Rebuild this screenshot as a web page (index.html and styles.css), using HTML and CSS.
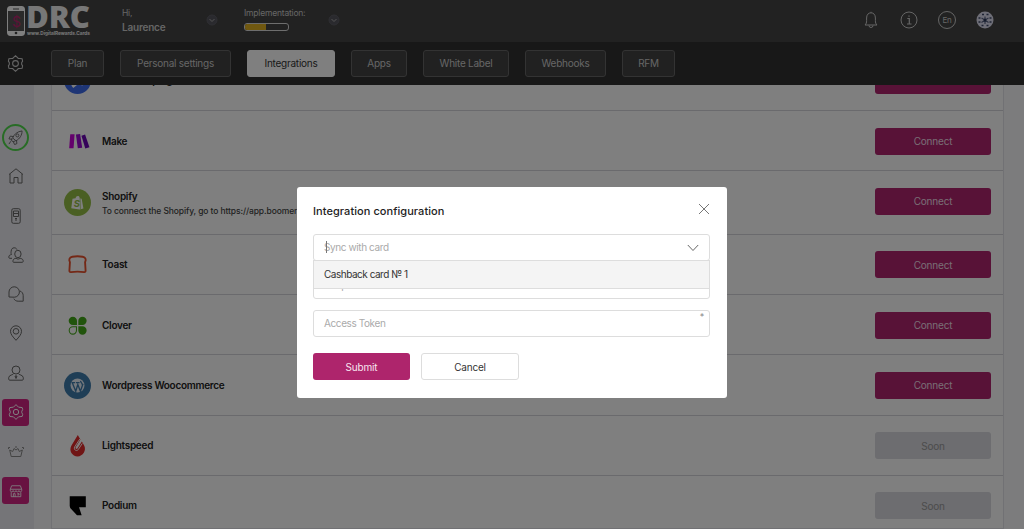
FILE: index.html
```html
<!DOCTYPE html>
<html lang="en">
<head>
    <meta charset="UTF-8">
    <meta name="viewport" content="width=device-width, initial-scale=1.0">
    <title>Integrations</title>
    <link rel="stylesheet" href="styles.css">
</head>
<body>

<!-- shared icons -->
<svg class="sprite">
    <symbol id="gear" viewBox="0 0 16 16">
        <path d="M6.3 2.2 8 .7l1.7 1.5.9 1 1.4.1 2.2.3.5 2.1-.9 1.5v1.6l.9 1.5-.5 2.1-2.2.3-1.4.1-.9 1L8 15.3l-1.7-1.5-.9-1-1.4-.1-2.2-.3-.5-2.1.9-1.5V7.2l-.9-1.5.5-2.1L4 3.3l1.4-.1z"/>
        <circle cx="8" cy="8" r="2.7"/>
    </symbol>
    <symbol id="chevron" viewBox="0 0 12 12">
        <circle cx="6" cy="6" r="5" class="chevron-ring"/>
        <path d="M3.5 5 6 7.5 8.5 5"/>
    </symbol>
</svg>

<header class="header">
    <svg class="logo" viewBox="0 0 84 32">
        <rect x="0.5" y="0.5" width="17" height="29" rx="2.5" fill="#555" stroke="#fff"/>
        <path d="M1 1h16v4H1zM1 25h16v4H1z" fill="#fff"/>
        <path d="M6 3h6" stroke="#555"/>
        <circle cx="9" cy="27" r="1.3" fill="#444"/>
        <text x="5" y="20.5" class="logo-sign">$</text>
        <text x="19" y="22" class="logo-name" textLength="64" lengthAdjust="spacingAndGlyphs">DRC</text>
        <text x="20" y="28.5" class="logo-url" textLength="63" lengthAdjust="spacingAndGlyphs">www.DigitalRewards.Cards</text>
    </svg>
    <div class="user">
        <div>
            <div class="small">Hi,</div>
            <div class="user-name">Laurence</div>
        </div>
        <svg class="chevron"><use href="#chevron"/></svg>
    </div>
    <div class="implementation">
        <div>
            <div class="small">Implementation:</div>
            <div class="progress"><span></span></div>
        </div>
        <svg class="chevron"><use href="#chevron"/></svg>
    </div>
    <div class="tools">
        <svg viewBox="0 0 18 18"><path d="M9 1.6V.8M3 14h12c-1.3-1.3-1.6-2.3-1.6-4.5V7C13.4 3.6 11.5 1.8 9 1.8S4.6 3.6 4.6 7v2.5c0 2.2-.3 3.2-1.6 4.5zM7 14.5a2 2 0 0 0 4 0"/></svg>
        <svg viewBox="0 0 18 18"><circle cx="9" cy="9" r="8"/><path d="M7.3 7.5h2V13M7 13h4.500M9 4.4v1.4" stroke-width="1.2"/></svg>
        <span class="lang">En</span>
        <svg viewBox="0 0 18 18" class="avatar">
            <circle cx="9" cy="9" r="8.5"/>
            <path d="M9 9V5.5M9 9l3.5-2M9 9l3.5 2.5M9 9v4M9 9l-3.5 2.5M9 9 5.5 7"/>
            <path class="dots" d="M6 3.5h2M10.5 3.5h2M2.5 7h2M13.5 7h2M2.5 11h2M13.5 11h2M5.5 14.5h2M10.5 14.5h2"/>
            <circle class="core" cx="9" cy="9" r="1.5"/>
        </svg>
    </div>
</header>

<nav class="subnav">
    <svg class="subnav-icon"><use href="#gear"/></svg>
    <a class="tab tab-plan">Plan</a>
    <a class="tab tab-personal">Personal settings</a>
    <a class="tab tab-integrations active">Integrations</a>
    <a class="tab tab-apps">Apps</a>
    <a class="tab tab-label">White Label</a>
    <a class="tab tab-webhooks">Webhooks</a>
    <a class="tab tab-rfm">RFM</a>
</nav>

<div class="page">
    <aside class="sidebar">
        <a class="side-item start">
            <svg viewBox="0 0 16 16"><path d="M5 8.5C6.500 4.5 10 1.5 15 1c0 4.5-2.5 8.5-6.5 10.500zM5.5 7l-3-.5L1 9.5l3.500.5M9 11l.5 3.500-2.500 1L5.500 12M4.500 8.500l-1 2.500 2 1.500 2.500-1M3 12l-2 3"/><circle cx="10" cy="5.800" r="1.6"/></svg>
        </a>
        <a class="side-item"><svg viewBox="0 0 16 16"><path d="M1 6.5 8 .8l7 5.700M2 6v9h4V9.500h4V15h4V6"/></svg></a>
        <a class="side-item"><svg viewBox="0 0 16 16"><rect x="3.8" y=".7" width="8.4" height="14.6" rx="1.5"/><path d="M5.5 3h5v5.500h-5zM5.500 5.500h5M7 10.500h2M7 12h2"/></svg></a>
        <a class="side-item"><svg viewBox="0 0 16 16"><path d="M5.5 15.300h8.800c1 0 1-1.300.8-2-.4-1.500-2-1.800-3-2-1.300 1-2.800 1-4 0-1.300.2-2.700.5-3 2-.2.800-.3 2 .4 2zM4 11.300H1.500C.5 11.300.7 9 1.500 8.300c.6-.5 1.500-.6 2-.8C2.800 6.500 3 5 3.200 4c.1-2 1.300-3.200 3-3.200 1.500 0 2.300.7 2.700 1.700"/><ellipse cx="9.9" cy="7" rx="3.2" ry="3.7"/></svg></a>
        <a class="side-item"><svg viewBox="0 0 16 16"><path d="M1 11V6a5.200 5.200 0 1 1 5.300 5.200zM12 5c2 .7 3.200 2.500 3.200 4.600v5.600h-5c-2 0-3.500-.9-4.300-2.500"/></svg></a>
        <a class="side-item"><svg viewBox="0 0 16 16"><path d="M8 15.300C5 12 2.500 9.300 2.500 6.300a5.500 5.500 0 0 1 11 0c0 3-2.500 5.700-5.500 9z"/><circle cx="8" cy="6.3" r="2.8"/></svg></a>
        <a class="side-item"><svg viewBox="0 0 16 16"><circle cx="8" cy="5" r="4"/><path d="M5.700 8.500c-.3 1.700-4.700 1-5 4.200v1.200c0 .8.300 1.300 1 1.300h12.600c.7 0 1-.5 1-1.300v-1.200c-.3-3.200-4.700-2.500-5-4.200M7 11h2l-1 2.500z"/></svg></a>
        <a class="side-item active"><svg><use href="#gear"/></svg></a>
        <a class="side-item crown"><svg viewBox="0 0 16 16"><path d="M3.2 13.500h9.600L14.300 7l-3 1.500L10 5.500 8 7 6 5.500 4.700 8.500l-3-1.500z"/><path d="M.5 6V4.500H2M15.500 6V4.500H14M7 4h2"/></svg></a>
        <a class="side-item active shop"><svg viewBox="0 0 16 16"><path d="M3 2h10l1.500 4h-13zM1.500 6v1.500c0 2 3.200 2 3.200 0 0 2 3.300 2 3.300 0 0 2 3.300 2 3.300 0 0 2 3.200 2 3.200 0V6M2.500 9.500v5h11v-5M5 14.500v-3.500h2v3.500M9.500 11h2v1.500h-2"/></svg></a>
    </aside>

    <main class="integrations">
        <div class="row">
            <svg class="brand" viewBox="0 0 26 26"><circle cx="13" cy="13" r="13" fill="#3d6bea"/><path d="M8 19l5-4 4 1 3-7" stroke="#fff" stroke-width="3" fill="none"/></svg>
            <div class="info"><div class="name">ActiveCampaign</div></div>
            <button class="btn">Connect</button>
        </div>
        <div class="row">
            <svg class="brand" viewBox="0 0 26 26">
                <path d="M6 6h4.200L9.200 19.500H5z" fill="#c800d8"/>
                <path d="M11.500 6.300l4-.5 2 13.200-4.200.6z" fill="#9a08d2"/>
                <path d="M16.800 7.500l3.500-1.200 4.200 12.200-4 1.300z" fill="#6a06b4"/>
            </svg>
            <div class="info"><div class="name">Make</div></div>
            <button class="btn">Connect</button>
        </div>
        <div class="row tall">
            <svg class="brand" viewBox="0 0 26 26">
                <circle cx="13" cy="13" r="13" fill="#95bf47"/>
                <path d="M8.200 9.500l3-.7c.2-2 3.600-3.300 4 .2l1.800.5 1.700 9.300-3.700 1-8-1.200z" fill="#fff"/>
                <path d="M15.500 8.500l.3 11" stroke="#95bf47" stroke-width=".6"/>
                <text x="9.5" y="17.7" class="bag-sign">S</text>
            </svg>
            <div class="info">
                <div class="name">Shopify</div>
                <div class="hint">To connect the Shopify, go to https://app.boomerangme.cards</div>
            </div>
            <button class="btn">Connect</button>
        </div>
        <div class="row">
            <svg class="brand" viewBox="0 0 26 26"><path d="M8 5.500q5-1 10 0c3 .6 3.500 3 2.300 5.200l.5 8.300q0 1.500-1.500 1.300-6.300-.8-12.600 0-1.500.2-1.500-1.300l.5-8.300C4.500 8.500 5 6.100 8 5.500z" fill="none" stroke="#e8502c" stroke-width="1.8"/></svg>
            <div class="info"><div class="name">Toast</div></div>
            <button class="btn">Connect</button>
        </div>
        <div class="row">
            <svg class="brand" viewBox="0 0 26 26">
                <path d="M12.500 12.500h-4a4 4 0 1 1 4-4zM13.800 12.500h4a4 4 0 1 0-4-4zM13.800 13.800v4a4 4 0 1 0 4-4z" fill="#43a818"/>
                <path d="M12 14.300v3.500a3.500 3.500 0 1 1-3.500-3.500z" fill="none" stroke="#43a818"/>
            </svg>
            <div class="info"><div class="name">Clover</div></div>
            <button class="btn">Connect</button>
        </div>
        <div class="row">
            <svg class="brand" viewBox="0 0 26 26">
                <circle cx="13" cy="13" r="13" fill="#3f7dad"/>
                <circle cx="13" cy="13" r="6.7" fill="#e8f0f8"/>
                <path d="M8 10.300l3.300 8.200 2-6.500 2.500 6.500 2.500-7.200M7.200 10.300h3.500M11.500 10.300H15M16 8.500c-.3 1.500 1.700 2 1.700 4" fill="none" stroke="#3f7dad" stroke-width="1.3"/>
            </svg>
            <div class="info"><div class="name">Wordpress Woocommerce</div></div>
            <button class="btn">Connect</button>
        </div>
        <div class="row">
            <svg class="brand" viewBox="0 0 26 26">
                <path d="M13.300 3l2.500 4.200-4.600 7.400c-.5 1 .8 2.300 1.700 1.300l4.300-6.800 2.200 3.900c2.500 4.500-1.200 10.500-6.300 10.500S4.300 18 7.200 13z" fill="#e12b2b"/>
                <path d="M15.200 6.800l-5 7.700c-1 2.500 1.500 4.500 3.500 2.500l3.900-6" fill="none" stroke="#fff" stroke-width=".9"/>
            </svg>
            <div class="info"><div class="name">Lightspeed</div></div>
            <button class="btn soon">Soon</button>
        </div>
        <div class="row">
            <svg class="brand" viewBox="0 0 26 26"><path d="M5.500 4h15.500v10.800h-6.500l2.500 7.700h-4.500l-6.500-7-.5-2z" fill="#000"/></svg>
            <div class="info"><div class="name">Podium</div></div>
            <button class="btn soon">Soon</button>
        </div>
    </main>
</div>

<div class="overlay">
    <div class="modal">
        <div class="modal-head">
            <h2>Integration configuration</h2>
            <svg class="close" viewBox="0 0 12 12"><path d="M1 1l10 10M11 1 1 11"/></svg>
        </div>
        <div class="field select">
            <span class="placeholder caret">Sync with card</span>
            <svg class="arrow" viewBox="0 0 12 8"><path d="M.8 1 6 6.500 11.200 1"/></svg>
            <div class="dropdown">Cashback card № 1</div>
        </div>
        <div class="field"><span class="placeholder">Shop</span></div>
        <div class="field">
            <span class="placeholder">Access Token</span>
            <span class="required">*</span>
        </div>
        <div class="actions">
            <button class="submit">Submit</button>
            <button class="cancel">Cancel</button>
        </div>
    </div>
</div>

</body>
</html>
```
FILE: styles.css
```css
* {
    box-sizing: border-box;
}
body {
    margin: 0;
    height: 100vh;
    overflow: hidden;
    display: flex;
    flex-direction: column;
    font-family: Inter, "Open Sans", sans-serif;
    font-size: 10px;
    letter-spacing: -0.25px;
    color: #222;
    background-color: #f8f8fb;
}
svg {
    fill: none;
    stroke: currentColor;
}
svg text {
    stroke: none;
    letter-spacing: 0;
}
.sprite {
    position: absolute;
    width: 0;
    height: 0;
}
button {
    font-family: inherit;
    font-size: 10px;
    letter-spacing: -0.18px;
    border: none;
    border-radius: 3px;
    padding: 0;
}

/* header */
.header {
    display: flex;
    flex: none;
    height: 42px;
    padding: 6px 30px 0 7px;
    background-color: #444;
    color: #ccc;
}
.logo {
    width: 84px;
    height: 32px;
    flex: none;
    overflow: visible;
}
.brand, .logo {
    stroke: none;
}
.logo-sign {
    font-size: 14px;
    fill: #b8256f;
}
.logo-name {
    font-family: "Open Sans", sans-serif;
    font-size: 30px;
    font-weight: 800;
    fill: #eee;
}
.logo-url {
    font-size: 5px;
    font-weight: 700;
    fill: #eee;
}
.user, .implementation {
    display: flex;
    justify-content: space-between;
}
.user {
    width: 96px;
    margin-left: 31px;
}
.implementation {
    width: 96px;
    margin-left: 26px;
}
.small {
    font-size: 8.5px;
    line-height: 14px;
    letter-spacing: -0.2px;
}
.user-name {
    font-size: 10px;
    font-weight: 600;
    line-height: 14px;
    letter-spacing: -0.2px;
}
.chevron {
    width: 12px;
    height: 12px;
    margin-top: 8px;
    color: #aaa;
}
.chevron-ring {
    fill: #54545c;
    stroke: #5e5e66;
}
.progress {
    width: 45px;
    height: 8px;
    margin-top: 3px;
    border: 1px solid #ddd;
    border-radius: 3px;
    overflow: hidden;
}
.progress span {
    display: block;
    width: 21px;
    height: 6px;
    background-color: #e0b020;
}
.tools {
    display: flex;
    gap: 20px;
    margin-left: auto;
    padding-top: 5px;
}
.tools svg, .lang {
    width: 18px;
    height: 18px;
}
.lang {
    border: 1px solid #ccc;
    border-radius: 50%;
    font-size: 8px;
    line-height: 16px;
    text-align: center;
}
.avatar {
    fill: #dde;
    stroke: none;
}
.avatar path {
    stroke: #5a6484;
    stroke-width: 1.2;
}
.avatar .dots {
    stroke: #3d4868;
    stroke-width: 1.5;
}
.avatar .core {
    fill: #2d3858;
}

/* settings tabs */
.subnav {
    display: flex;
    flex: none;
    align-items: flex-start;
    height: 43px;
    padding: 8px 0 0 7px;
    background-color: #303030;
    color: #ccc;
}
.subnav-icon {
    width: 17px;
    height: 17px;
    margin: 5px 27px 0 0;
}
.tab {
    height: 27px;
    margin-right: 16px;
    border: 1px solid #666;
    border-radius: 3px;
    background-color: #424242;
    line-height: 25px;
    text-align: center;
}
.tab.active {
    border-color: #fff;
    background-color: #fff;
    color: #333;
}
.tab-plan, .tab-rfm {
    width: 53px;
}
.tab-personal {
    width: 111px;
}
.tab-integrations {
    width: 88px;
}
.tab-apps {
    width: 56px;
}
.tab-label {
    width: 86px;
}
.tab-webhooks {
    width: 81px;
}

/* page */
.page {
    display: flex;
    flex: 1;
    min-height: 0;
    overflow: hidden;
}
.sidebar {
    display: flex;
    flex-direction: column;
    flex: none;
    align-items: center;
    gap: 12.3px;
    width: 34px;
    padding: 38.5px 3px 0 0;
    background-color: #ebebf0;
    color: #666;
}
.side-item {
    display: flex;
    flex: none;
    align-items: center;
    justify-content: center;
    width: 27px;
    height: 27px;
    border-radius: 3px;
}
.side-item svg {
    width: 16px;
    height: 16px;
}
.side-item.start {
    border: 2px solid #50d84c;
    border-radius: 50%;
}
.side-item.start svg {
    width: 15px;
    height: 15px;
}
.side-item.crown {
    color: #888;
}
.side-item.active {
    background-color: #d02482;
    color: #fff;
}
.side-item.shop svg {
    width: 14px;
    height: 14px;
}
.integrations {
    flex: 1;
    margin: -34.3px 20px 0 17px;
    border: 1px solid #e2e2e8;
    border-top: none;
    background-color: #fff;
}
.row {
    display: flex;
    align-items: flex-start;
    height: 60.3px;
    padding: 16.5px 12px 0;
    border-bottom: 1px solid #d4d4da;
}
.row.tall {
    height: 63.5px;
}
.row.tall .brand {
    margin-top: 1.5px;
}
.brand {
    width: 27px;
    height: 27px;
    flex: none;
}
.bag-sign {
    font-size: 9px;
    font-weight: 700;
    font-style: italic;
    fill: #95bf47;
}
.info {
    flex: 1;
    padding: 6px 0 0 11px;
}
.tall .info {
    padding-top: 1px;
}
.name {
    font-weight: 600;
    line-height: 15px;
    letter-spacing: -0.28px;
}
.hint {
    font-size: 8.5px;
    font-weight: 500;
    line-height: 15px;
    letter-spacing: -0.1px;
    color: #444;
}
.btn {
    width: 116px;
    height: 27px;
    background-color: #b0246e;
    color: #f0dce8;
}
.btn.soon {
    background-color: #dadae0;
    color: #999;
}

/* modal */
.overlay {
    position: fixed;
    inset: 0;
    padding-top: 187px;
    background-color: rgba(0, 0, 0, 0.5);
}
.modal {
    width: 430px;
    height: 210.5px;
    margin: 0 auto;
    padding: 0 17px 0 16px;
    border-radius: 3px;
    background-color: #fff;
}
.modal-head {
    display: flex;
    align-items: flex-start;
    justify-content: space-between;
    height: 47px;
}
.modal h2 {
    margin: 16px 0 0;
    font-size: 11px;
    font-weight: 500;
    line-height: 16px;
    letter-spacing: 0.06px;
}
.close {
    width: 12px;
    height: 12px;
    margin-top: 16px;
    stroke: #777;
}
.field {
    position: relative;
    display: flex;
    align-items: center;
    justify-content: space-between;
    height: 27px;
    margin-bottom: 11px;
    padding: 0 10px;
    border: 1px solid #ddd;
    border-radius: 3px;
}
.placeholder {
    margin-bottom: 1px;
    color: #aaa;
    letter-spacing: -0.4px;
}
.caret {
    position: relative;
}
.caret::before {
    content: "";
    position: absolute;
    left: 2px;
    top: 0;
    width: 1px;
    height: 12px;
    background-color: #777;
}
.arrow {
    width: 12px;
    height: 8px;
    stroke: #666;
}
.dropdown {
    position: absolute;
    left: -1px;
    right: -1px;
    top: 25px;
    z-index: 1;
    height: 29px;
    padding-left: 10px;
    border: 1px solid #ddd;
    background-color: #f4f4f4;
    line-height: 27px;
    letter-spacing: -0.48px;
    color: #333;
}
.required {
    align-self: flex-start;
    margin-right: -5px;
    font-size: 9px;
    color: #888;
}
.actions {
    display: flex;
    gap: 11px;
    padding-top: 5px;
}
.actions button {
    width: 97px;
    height: 27px;
}
.submit {
    background-color: #ae256c;
    color: #f8e6f0;
}
.actions .cancel {
    width: 98px;
    border: 1px solid #ddd;
    background-color: #fff;
    color: #333;
}
```
